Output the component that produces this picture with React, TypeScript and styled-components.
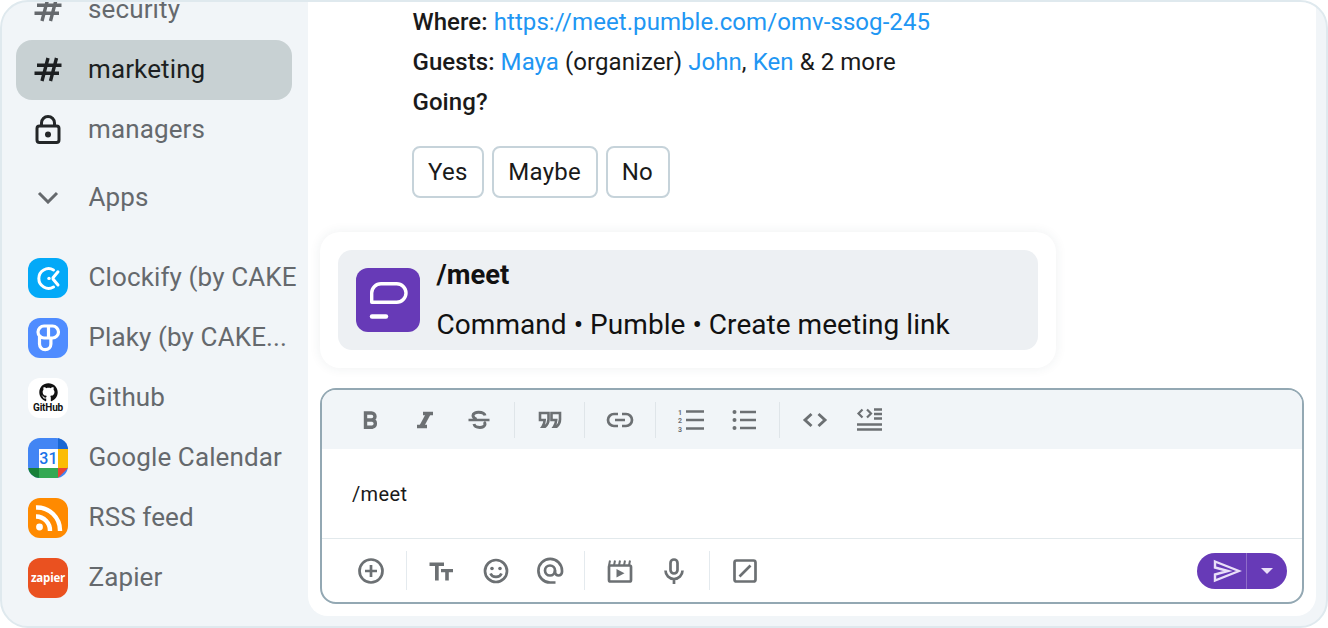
import React from "react";
import styled, { createGlobalStyle } from "styled-components";
import { FaGithub } from "react-icons/fa";

const Global = createGlobalStyle`
  html, body { margin: 0; padding: 0; background: #fff; }
  body { font-family: Roboto, "Liberation Sans", sans-serif; }
  * { box-sizing: border-box; }
`;

const Frame = styled.div`
  width: 1328px; height: 628px; display: flex; overflow: hidden;
  background: #f1f5f8; border: 2px solid #dfe9ee; border-radius: 28px;
`;
const Sidebar = styled.aside`
  width: 306px; flex: none; height: 100%; display: flex; flex-direction: column;
  justify-content: flex-end; padding: 0 0 18px 14px; overflow: hidden;
`;
const Row = styled.div<{ $active?: boolean; $mt?: number; $mb?: number }>`
  flex: none; width: 276px; height: 60px; padding-bottom: 2px; display: flex; align-items: center;
  border-radius: 16px; white-space: nowrap;
  background: ${p => (p.$active ? "#c8d1d3" : "transparent")};
  color: ${p => (p.$active ? "#1c1f21" : "#65696d")};
  margin-top: ${p => p.$mt ?? 0}px;
  margin-bottom: ${p => p.$mb ?? 0}px;
  font-size: 26px; letter-spacing: 0.12px;
`;
const RowIcon = styled.span`
  width: 72px; flex: none; display: flex; justify-content: center; padding-right: 8px;
`;
const AppsLabel = styled.span` margin-left: 0.5px; `;
const AppTile = styled.span<{ $bg: string }>`
  width: 40px; height: 40px; margin: 2px 20.5px 0 12px; flex: none; border-radius: 12px;
  background: ${p => p.$bg}; overflow: hidden; display: flex; flex-direction: column;
  align-items: center; justify-content: center; color: #fff;
`;
const GithubWord = styled.span`
  font: 700 10px/10px Roboto, sans-serif; color: #111; letter-spacing: -0.2px; margin-top: 1px;
`;
const ZapierWord = styled.span`
  font: 700 11.5px/12px "Open Sans", Roboto, sans-serif; color: #fff; letter-spacing: -0.2px;
`;
const Main = styled.main`
  flex: 1; min-width: 0; height: 614px; background: #fff; border-radius: 0 0 20px 20px;
  margin-right: 10px; padding: 0 12px 12px; display: flex; flex-direction: column;
  justify-content: flex-end; overflow: hidden;
`;
const Message = styled.div`
  flex: none; padding-left: 92px; font-size: 24px; line-height: 40px; color: #1a1a1a;
  strong { font-weight: 500; }
`;
const MessageLine = styled.div` padding-left: 0.5px; letter-spacing: 0.07px; `;
const Link = styled.span` color: #2196f3; `;
const Choices = styled.div` display: flex; gap: 8px; margin-top: 24px; `;
const Choice = styled.div`
  height: 52px; padding: 0 14.8px 0 14px; display: flex; align-items: center; letter-spacing: 0.25px;
  border: 2px solid #c6d3da; border-radius: 8px; font-size: 24px; color: #1a1a1a; background: #fff;
`;
const Suggest = styled.div`
  flex: none; width: 736px; height: 136px; margin-top: 34px; padding: 18px; background: #fff;
  border-radius: 20px; box-shadow: 0 0 12px rgba(40, 60, 80, 0.08);
`;
const SuggestItem = styled.div`
  height: 100px; background: #edf0f3; border-radius: 14px; padding: 18px; display: flex; gap: 16.6px;
`;
const Logo = styled.span`
  width: 64px; height: 64px; flex: none; border-radius: 12px; background: #673ab7; display: block;
`;
const SuggestText = styled.div`
  display: flex; flex-direction: column; color: #111;
  b { font: 700 27.4px/26px Roboto, sans-serif; margin-top: -6px; }
  span { font: 400 28px/34px Roboto, sans-serif; margin-top: 20px; white-space: nowrap; letter-spacing: 0.04px; }
`;
const Composer = styled.section`
  flex: none; height: 216px; margin-top: 20px; border: 2px solid #93a8b3; border-radius: 16px;
  overflow: hidden; display: flex; flex-direction: column;
`;
const Toolbar = styled.div`
  height: 59px; flex: none; background: #f1f5f8; display: flex; align-items: center; padding-left: 22px;
`;
const Tool = styled.span`
  width: 54px; height: 28px; flex: none; display: flex; align-items: center; justify-content: center;
  svg { display: block; fill: none; stroke: #6c7073; stroke-width: 2.7; }
`;
const Sep = styled.span<{ $h: number; $c: string }>`
  width: 1px; height: ${p => p.$h}px; margin: 0 7.75px; background: ${p => p.$c}; flex: none;
`;
const Editor = styled.div`
  height: 90px; flex: none; padding: 33px 30px 0; font-size: 20px; line-height: 24px; color: #1a1a1a;
  letter-spacing: 0.35px; border-bottom: 1px solid #e2e9ec;
`;
const Footer = styled.div`
  flex: 1; display: flex; align-items: center; padding: 0 15px 0 22px;
`;
const Send = styled.div`
  margin-left: auto; width: 90px; height: 36px; border-radius: 18px; background: #673ab7; display: flex;
`;
const SendMain = styled.span`
  width: 50px; flex: none; display: flex; align-items: center; justify-content: flex-end; padding-right: 4px;
  border-right: 1px solid #8f6cc9;
`;
const SendCaret = styled.span` flex: 1; display: flex; align-items: center; justify-content: center; `;

const Hash = ({ c }: { c: string }) => (
  <svg width="28" height="26" viewBox="0 0 28 26" fill="none" stroke={c} strokeWidth="3.4">
    <path d="M3 9.3h24.5M0.5 17.3h24.5M14 2L8 25M22.5 2l-6 23" />
  </svg>
);
const Lock = () => (
  <svg width="26" height="29" viewBox="0 0 26 29" fill="none" stroke="#232628" strokeWidth="3">
    <rect x="2" y="11" width="22" height="16.5" rx="2.5" />
    <path d="M6.5 11V8a6.5 6.5 0 0 1 13 0v3" />
    <circle cx="13" cy="19.5" r="3" fill="#232628" stroke="none" />
  </svg>
);
const Chevron = () => (
  <svg width="22" height="13" viewBox="0 0 22 13" fill="none" stroke="#65696d" strokeWidth="3">
    <path d="M2 2l9 9 9-9" />
  </svg>
);
const I = ({ children, w = 28, h = 28 }: { children: React.ReactNode; w?: number; h?: number }) => (
  <svg width={w} height={h} viewBox={`0 0 ${w} ${h}`}>{children}</svg>
);
const g = "#6c7073";

export default function App() {
  return (
    <>
      <Global />
      <Frame>
        <Sidebar>
          <Row><RowIcon><Hash c="#65696d" /></RowIcon>security</Row>
          <Row $active><RowIcon><Hash c="#1c1f21" /></RowIcon>marketing</Row>
          <Row><RowIcon><Lock /></RowIcon>managers</Row>
          <Row $mt={8} $mb={20}><RowIcon><Chevron /></RowIcon><AppsLabel>Apps</AppsLabel></Row>
          <Row>
            <AppTile $bg="#03a9f8">
              <svg width="40" height="40" viewBox="0 0 40 40" fill="none" stroke="#fff" strokeWidth="3" strokeLinecap="round">
                <path d="M25.5 12a9.8 9.8 0 1 0 0 17" />
                <path d="M25 19.8l5-6M25 21l5 6" />
                <circle cx="21" cy="20.4" r="1.7" fill="#fff" stroke="none" />
              </svg>
            </AppTile>
            Clockify (by CAKE
          </Row>
          <Row>
            <AppTile $bg="#4f8cff">
              <svg width="40" height="40" viewBox="0 0 40 40" fill="none" stroke="#fff" strokeWidth="3.2">
                <path d="M20.5 20V8h4a6 6 0 0 1 0 12H16a6 6 0 0 1-6-6 6 6 0 0 1 6-6h4.5" />
                <path d="M11.5 17v9a5.7 5.7 0 0 0 5.7 5.7 5.7 5.7 0 0 0 5.7-5.7v-6" />
              </svg>
            </AppTile>
            Plaky (by CAKE...
          </Row>
          <Row>
            <AppTile $bg="#ffffff">
              <FaGithub size={19} color="#111" />
              <GithubWord>GitHub</GithubWord>
            </AppTile>
            Github
          </Row>
          <Row>
            <AppTile $bg="#4285f4">
              <svg width="40" height="40" viewBox="0 0 40 40">
                <rect x="11" y="11" width="19" height="19" fill="#fff" />
                <rect x="30" y="11" width="10" height="19" fill="#fbbc04" />
                <rect x="11" y="30" width="19" height="10" fill="#34a853" />
                <path d="M0 30h11v10H0z" fill="#188038" />
                <path d="M30 30h10L30 40z" fill="#ea4335" />
                <path d="M30 0h10v11H30z" fill="#1967d2" />
                <text x="20.5" y="26.4" textAnchor="middle" fontFamily="Roboto, sans-serif" fontWeight="500" fontSize="16" fill="#1a73e8">31</text>
              </svg>
            </AppTile>
            Google Calendar
          </Row>
          <Row>
            <AppTile $bg="#ff8a00">
              <svg width="40" height="40" viewBox="0 0 40 40" fill="none" stroke="#fff" strokeWidth="4.4">
                <circle cx="11.5" cy="29" r="3.4" fill="#fff" stroke="none" />
                <path d="M8 18.5A14 14 0 0 1 22 33" />
                <path d="M8 9.5A23 23 0 0 1 32 33" />
              </svg>
            </AppTile>
            RSS feed
          </Row>
          <Row>
            <AppTile $bg="#ea5120"><ZapierWord>zapier</ZapierWord></AppTile>
            Zapier
          </Row>
        </Sidebar>
        <Main>
          <Message>
            <MessageLine><strong>Where:</strong> <Link>https://meet.pumble.com/omv-ssog-245</Link></MessageLine>
            <MessageLine><strong>Guests:</strong> <Link>Maya</Link> (organizer) <Link>John</Link>, <Link>Ken</Link> &amp; 2 more</MessageLine>
            <MessageLine><strong>Going?</strong></MessageLine>
            <Choices>
              <Choice>Yes</Choice>
              <Choice>Maybe</Choice>
              <Choice>No</Choice>
            </Choices>
          </Message>
          <Suggest>
            <SuggestItem>
              <Logo>
                <svg width="64" height="64" viewBox="0 0 64 64" fill="none" stroke="#fff" strokeWidth="3.4" strokeLinecap="round">
                  <path d="M15.7 34.3V25a9.3 9.3 0 0 1 9.3-9.3h15.7a9.3 9.3 0 0 1 0 18.6z" strokeLinejoin="round" />
                  <path d="M16 48.5h14" strokeWidth="4.4" />
                </svg>
              </Logo>
              <SuggestText>
                <b>/meet</b>
                <span>Command • Pumble • Create meeting link</span>
              </SuggestText>
            </SuggestItem>
          </Suggest>
          <Composer>
            <Toolbar>
              <Tool><I><path d="M8.5 7h6a3.5 3.5 0 0 1 0 7h-6zM8.5 14h7a3.7 3.7 0 0 1 0 7.2h-7z" strokeWidth="3.4" /></I></Tool>
              <Tool><I><path d="M12 7.5h10M6 20.5h10" strokeWidth="3.4" /><path d="M17.5 7.5L10.5 20.5" strokeWidth="4.6" /></I></Tool>
              <Tool><I><path d="M3.5 14h21" /><path d="M20 9.5C19 5.5 8 5 8 9.5c0 2 1.5 3 3.5 3.8M9 18c1 4.5 11 4.5 11 .2 0-1-.3-1.8-1-2.4" strokeWidth="3" /></I></Tool>
              <Sep $h={36} $c="#dfe5e9" />
              <Tool><I><path d="M4 7h8.5v6.5c0 3-1.5 5.5-3.5 7.2H6.5c1.2-1.7 2-4 2.2-6.7H4zM15.5 7H24v6.5c0 3-1.5 5.5-3.5 7.2H18c1.2-1.7 2-4 2.2-6.7h-4.7z" strokeWidth="2.6" /></I></Tool>
              <Sep $h={36} $c="#dfe5e9" />
              <Tool><I><path d="M12 8H8a6 6 0 0 0 0 12h4M16 8h4a6 6 0 0 1 0 12h-4M9 14h10" /></I></Tool>
              <Sep $h={36} $c="#dfe5e9" />
              <Tool>
                <I>
                  <path d="M9 5.5h18M9 14h18M9 22.5h18" strokeWidth="2.6" />
                  <text x="3" y="9" fontSize="7" fontWeight="700" fontFamily="Roboto, sans-serif" textAnchor="middle" fill={g} stroke="none">1</text>
                  <text x="3" y="17" fontSize="7" fontWeight="700" fontFamily="Roboto, sans-serif" textAnchor="middle" fill={g} stroke="none">2</text>
                  <text x="3" y="25.5" fontSize="7" fontWeight="700" fontFamily="Roboto, sans-serif" textAnchor="middle" fill={g} stroke="none">3</text>
                </I>
              </Tool>
              <Tool>
                <I>
                  <path d="M9 6h16M9 14h16M9 22h16" strokeWidth="2.6" />
                  <circle cx="3.5" cy="6" r="2" fill={g} stroke="none" />
                  <circle cx="3.5" cy="14" r="2" fill={g} stroke="none" />
                  <circle cx="3.5" cy="22" r="2" fill={g} stroke="none" />
                </I>
              </Tool>
              <Sep $h={36} $c="#dfe5e9" />
              <Tool><I><path d="M10.5 8l-6.5 6 6.5 6M17.5 8l6.5 6-6.5 6" strokeWidth="2.9" /></I></Tool>
              <Tool>
                <I>
                  <path d="M7.5 3.5L3.5 7.5l4 4M12 3.5l4 4-4 4" strokeWidth="2.2" />
                  <path d="M19 3.5h8M19 8h8M19 12.5h8M2 18.5h25M2 23.5h25" strokeWidth="2.4" />
                </I>
              </Tool>
            </Toolbar>
            <Editor>/meet</Editor>
            <Footer>
              <Tool><I><circle cx="14" cy="14" r="11.5" /><path d="M14 8v12M8 14h12" /></I></Tool>
              <Sep $h={39} $c="#e4eaee" />
              <Tool><I><path d="M1.5 5.5h14.5v3.5h-5.3v14.5H7V9H1.5zM13 12h12v3.2h-4.2v8.3h-3.6v-8.3H13z" fill={g} stroke="none" /></I></Tool>
              <Tool><I><circle cx="14" cy="14" r="11" /><circle cx="10" cy="11.5" r="1.8" fill={g} stroke="none" /><circle cx="18" cy="11.5" r="1.8" fill={g} stroke="none" /><path d="M8.5 16.5c1.8 4.5 9.2 4.5 11 0" /></I></Tool>
              <Tool><I><circle cx="14" cy="13.5" r="5" /><path d="M19 13.5v1.5a3.5 3.5 0 0 0 7 0v-1.5A11.8 11.8 0 1 0 14 25.5h5.5" /></I></Tool>
              <Sep $h={39} $c="#e4eaee" />
              <Tool><I><rect x="3" y="8.5" width="22" height="16" rx="1.5" /><path d="M3 8.5l1-5M8 8.5l1-5M13 8.5l1-5M18 8.5l1-5M23 8.5l1-5" strokeWidth="2" /><path d="M10.5 12l8 4.3-8 4.3z" fill={g} stroke="none" /></I></Tool>
              <Tool><I><rect x="10.5" y="2.5" width="7" height="14" rx="3.5" /><path d="M5.5 13.5a8.5 8.5 0 0 0 17 0M14 22v5" /></I></Tool>
              <Sep $h={39} $c="#e4eaee" />
              <Tool><I><rect x="3.5" y="3.5" width="21" height="21" rx="2" /><path d="M8.5 19.5l11-11" /></I></Tool>
              <Send>
                <SendMain>
                  <svg width="30" height="24" viewBox="0 0 30 24" fill="none" stroke="#eadff8" strokeWidth="2.4" strokeLinejoin="miter">
                    <path d="M3 2.5L27 12 3 21.5v-6L16 12 3 8.5z" />
                  </svg>
                </SendMain>
                <SendCaret>
                  <svg width="12" height="6" viewBox="0 0 12 6"><path d="M0 0h12L6 6z" fill="#eadff8" /></svg>
                </SendCaret>
              </Send>
            </Footer>
          </Composer>
        </Main>
      </Frame>
    </>
  );
}
